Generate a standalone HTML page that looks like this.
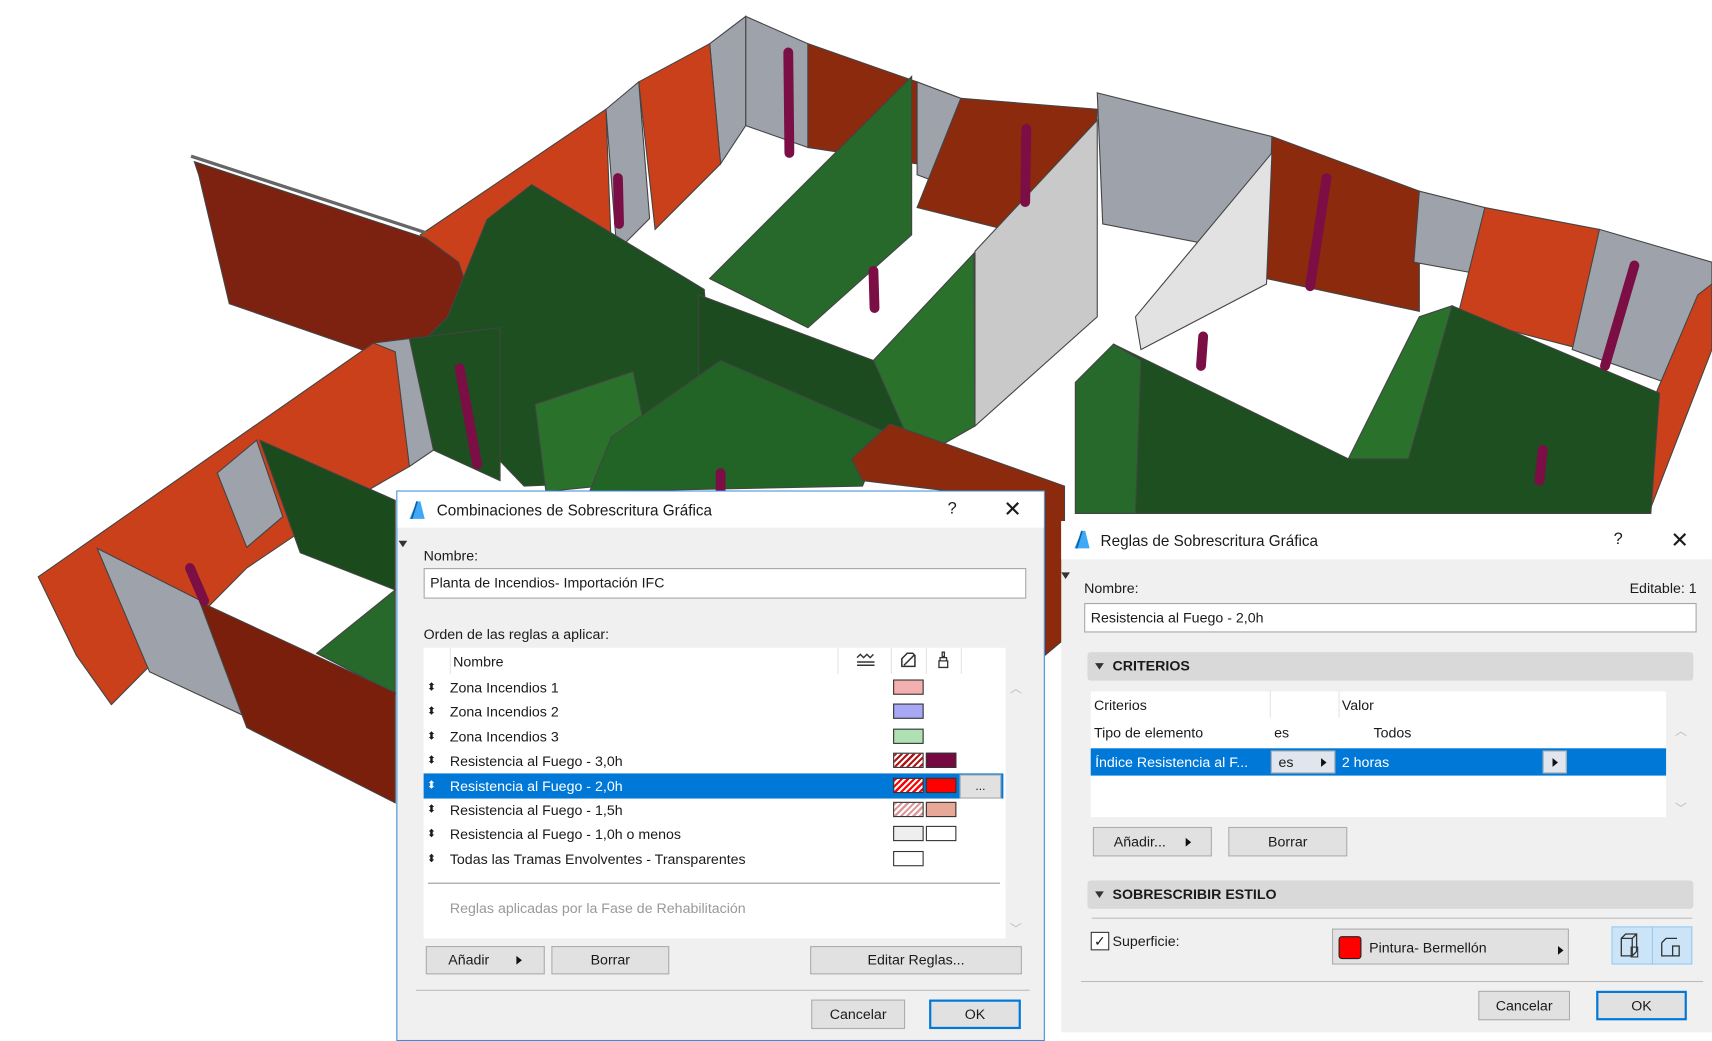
<!DOCTYPE html>
<html><head><meta charset="utf-8"><style>
html,body{margin:0;padding:0;width:1712px;height:1040px;overflow:hidden;background:#fff}
#s{position:absolute;left:0;top:0;width:1568px;height:952px;transform:scale(1.0918,1.0924);transform-origin:0 0;font-family:"Liberation Sans",sans-serif;font-size:13px;color:#1a1a1a}
.a{position:absolute}
.dlg{position:absolute;background:#f0f0f0}
.tb{position:absolute;left:0;right:0;top:0;background:#fff}
.in{position:absolute;background:#fff;border:1px solid #a6a6a6;box-sizing:border-box;padding-left:5px}
.btn{position:absolute;background:#e1e1e1;border:1px solid #adadad;box-sizing:border-box;text-align:center}
.ok{border:2px solid #0078d7}
.sw{position:absolute;width:26px;height:12px;border:1px solid #333}
.row{position:absolute;left:24px;font-size:13px}
.ar{position:absolute;left:3px;font-size:10px;line-height:10px}
.bar{position:absolute;background:#d9d9d9;border-radius:3px;font-weight:bold}
.tri{display:inline-block;width:0;height:0;border-left:4px solid transparent;border-right:4px solid transparent;border-top:6px solid #333;margin:0 8px 1px 7px}
.rt{display:inline-block;width:0;height:0;border-top:4px solid transparent;border-bottom:4px solid transparent;border-left:5px solid #111}
</style></head><body><div id="s">
<svg class="a" style="left:0;top:0" width="1568" height="952" viewBox="0 0 1568 952">
<g stroke="#444" stroke-width="1">
<polygon points="683,15 740,40 740,135 683,115" fill="#9ea3ab"/>
<polygon points="650,40 683,15 683,115 660,150" fill="#9ea3ab"/>
<polygon points="740,40 840,75 840,150 740,135" fill="#8c2a0e"/>
<polygon points="585,75 650,40 660,150 600,210" fill="#c9401a"/>
<polygon points="555,100 585,75 595,200 565,230" fill="#9ea3ab"/>
<polygon points="385,215 555,100 560,230 440,300" fill="#c9401a"/>
<polygon points="840,75 880,90 880,175 840,160" fill="#9ea3ab"/>
<polygon points="880,90 1005,100 1000,230 840,190" fill="#8c2a0e"/>
<polygon points="1005,85 1165,125 1165,235 1010,205" fill="#9ea3ab"/>
<polygon points="1165,125 1300,175 1300,285 1160,255" fill="#8c2a0e"/>
<polygon points="1300,175 1360,190 1350,250 1295,240" fill="#9ea3ab"/>
<polygon points="1360,190 1465,210 1450,320 1335,290" fill="#c9401a"/>
<polygon points="1465,210 1568,240 1568,300 1525,350 1440,320" fill="#9ea3ab"/>
<polygon points="1555,270 1568,260 1568,320 1510,470 1470,470" fill="#c9401a"/>
<polygon points="178,148 390,218 420,240 440,300 360,330 210,278 182,160" fill="#7d2210"/>
<polyline points="175,143 390,213" fill="none" stroke="#666" stroke-width="3"/>
<polygon points="893,230 1005,110 1005,290 893,390" fill="#c9c9c9"/>
<polygon points="1040,290 1165,140 1160,260 1045,320" fill="#e2e2e2"/>
<polygon points="650,255 835,70 835,215 740,300" fill="#26692a"/>
<polygon points="446,201 487,169 645,265 650,330 600,440 480,445 370,330 410,290" fill="#1d4f20"/>
<polygon points="640,270 800,330 892,232 892,385 840,420 740,430 640,400" fill="#1c4b1f"/>
<polygon points="800,330 892,232 893,390 840,420" fill="#2a722c"/>
<polygon points="490,370 580,340 600,440 500,450" fill="#2a722c"/>
<polygon points="560,400 660,330 810,395 790,445 540,450" fill="#226326"/>
<polygon points="985,350 1020,315 1235,420 1300,290 1330,280 1520,360 1512,470 985,470" fill="#1d4f20"/>
<polygon points="1235,420 1300,290 1330,280 1290,420" fill="#2a722c"/>
<polygon points="985,350 1020,315 1045,330 1040,470 985,470" fill="#26692a"/>
<polygon points="375,310 458,300 458,440 397,412" fill="#1d4f20"/>
<polygon points="342,314 375,310 397,412 375,427" fill="#9ea3ab"/>
<polygon points="35,528 342,314 362,322 375,427 300,470 226,520 102,645 70,600" fill="#c9401a"/>
<polygon points="199,433 235,403 259,473 226,501" fill="#9ea3ab"/>
<polygon points="238,403 362,458 362,540 275,506" fill="#1b4a1d"/>
<polygon points="290,598 362,540 362,635" fill="#26692a"/>
<polygon points="89,502 186,551 223,655 137,615" fill="#9ea3ab"/>
<polygon points="183,551 362,634 362,735 226,666" fill="#7a1f0b"/>
<polygon points="780,420 815,388 975,445 975,585 957,600 957,460 790,440" fill="#8c2a0e"/>
</g>
<g stroke="#7a0e45" stroke-width="9" stroke-linecap="round">
<line x1="722" y1="48" x2="723" y2="140"/><line x1="566" y1="163" x2="567" y2="205"/><line x1="940" y1="118" x2="939" y2="185"/><line x1="800" y1="248" x2="801" y2="282"/><line x1="1215" y1="163" x2="1200" y2="262"/><line x1="1497" y1="243" x2="1470" y2="335"/><line x1="1102" y1="308" x2="1100" y2="335"/><line x1="421" y1="337" x2="437" y2="425"/><line x1="174" y1="520" x2="187" y2="550"/><line x1="660" y1="433" x2="660" y2="450"/><line x1="1413" y1="412" x2="1410" y2="440"/>
</g>
</svg>

<div class="dlg" style="left:363px;top:449px;width:594px;height:504px;border:1px solid #3c8fd8;box-sizing:border-box">
 <div class="tb" style="height:33px"></div>
 <svg class="a" style="left:9px;top:8px" width="18" height="18"><path d="M2 17 L9 1 L12 1 L16 17 Z" fill="#3fa9f5"/><path d="M9 1 L4 17" stroke="#0a5fa8" stroke-width="1.5"/></svg>
 <div class="a" style="left:36px;top:9px;font-size:14px">Combinaciones de Sobrescritura Gráfica</div>
 <div class="a" style="left:504px;top:7px;font-size:15px">?</div>
 <div class="a" style="left:555px;top:4px;font-size:20px;font-weight:300">✕</div>
 <div class="a" style="left:1px;top:45px;border-left:4px solid transparent;border-right:4px solid transparent;border-top:6px solid #333"></div>
 <div class="a" style="left:24px;top:51px">Nombre:</div>
 <div class="in" style="left:24px;top:70px;width:552px;height:28px;line-height:26px">Planta de Incendios- Importación IFC</div>
 <div class="a" style="left:24px;top:123px">Orden de las reglas a aplicar:</div>
 <div class="a" style="left:24px;top:143px;width:533px;height:266px;background:#fff"></div>
 <div class="a" style="left:48px;top:143px;width:1px;height:24px;background:#e5e5e5"></div>
 <div class="a" style="left:403px;top:143px;width:1px;height:24px;background:#e5e5e5"></div>
 <div class="a" style="left:452px;top:143px;width:1px;height:24px;background:#e5e5e5"></div>
 <div class="a" style="left:484px;top:143px;width:1px;height:24px;background:#e5e5e5"></div>
 <div class="a" style="left:516px;top:143px;width:1px;height:24px;background:#e5e5e5"></div>
 <div class="a" style="left:51px;top:148px">Nombre</div>
 <svg class="a" style="left:420px;top:147px" width="18" height="14"><path d="M1 5 L4 2 L7 5 L10 2 L13 5 L16 2 M1 9 H17 M1 12 H17" fill="none" stroke="#333" stroke-width="1.3"/></svg>
 <svg class="a" style="left:460px;top:146px" width="16" height="16"><path d="M2 14 V7 L7 2 H12 L14 4 V14 Z M4 13 L13 4" fill="none" stroke="#333" stroke-width="1.4"/></svg>
 <svg class="a" style="left:494px;top:146px" width="12" height="16"><path d="M5 1 H7 V5 H5 Z M3 6 H9 V9 H3 Z M2 9 H10 V15 H2 Z" fill="none" stroke="#333" stroke-width="1.2"/></svg>
 <div class="a" style="left:24px;top:258px;width:531px;height:23px;background:#0078d7"></div>
 <div class="ar" style="left:27px;top:175px">⬍</div><div class="row" style="left:48px;top:172px">Zona Incendios 1</div>
 <div class="ar" style="left:27px;top:197px">⬍</div><div class="row" style="left:48px;top:194px">Zona Incendios 2</div>
 <div class="ar" style="left:27px;top:220px">⬍</div><div class="row" style="left:48px;top:217px">Zona Incendios 3</div>
 <div class="ar" style="left:27px;top:242px">⬍</div><div class="row" style="left:48px;top:239px">Resistencia al Fuego - 3,0h</div>
 <div class="ar" style="left:27px;top:265px;color:#fff">⬍</div><div class="row" style="left:48px;top:262px;color:#fff">Resistencia al Fuego - 2,0h</div>
 <div class="ar" style="left:27px;top:287px">⬍</div><div class="row" style="left:48px;top:284px">Resistencia al Fuego - 1,5h</div>
 <div class="ar" style="left:27px;top:309px">⬍</div><div class="row" style="left:48px;top:306px">Resistencia al Fuego - 1,0h o menos</div>
 <div class="ar" style="left:27px;top:332px">⬍</div><div class="row" style="left:48px;top:329px">Todas las Tramas Envolventes - Transparentes</div>
 <div class="sw" style="left:454px;top:172px;background:#f4b0b0"></div>
 <div class="sw" style="left:454px;top:194px;background:#a8a8f4"></div>
 <div class="sw" style="left:454px;top:217px;background:#aee0b4"></div>
 <div class="sw" style="left:454px;top:239px;background:repeating-linear-gradient(135deg,#b01515 0 2px,#fff 2px 4px)"></div>
 <div class="sw" style="left:484px;top:239px;background:#760940"></div>
 <div class="sw" style="left:454px;top:262px;background:repeating-linear-gradient(135deg,#f00 0 2px,#fff 2px 4px)"></div>
 <div class="sw" style="left:484px;top:262px;background:#f00"></div>
 <div class="a" style="left:515px;top:259px;width:36px;height:20px;background:#e1e1e1;border:1px solid #adadad;text-align:center;font-size:11px;line-height:20px">...</div>
 <div class="sw" style="left:454px;top:284px;background:repeating-linear-gradient(135deg,#d99 0 2px,#fff 2px 4px)"></div>
 <div class="sw" style="left:484px;top:284px;background:#e8a898"></div>
 <div class="sw" style="left:454px;top:306px;background:#eee"></div>
 <div class="sw" style="left:484px;top:306px;background:#fff"></div>
 <div class="sw" style="left:454px;top:329px;background:#fff"></div>
 <div class="a" style="left:28px;top:358px;width:524px;height:1px;background:#999"></div>
 <div class="a" style="left:48px;top:374px;color:#999">Reglas aplicadas por la Fase de Rehabilitación</div>
 <div class="a" style="left:561px;top:172px;color:#bbb;font-size:11px">︿</div>
 <div class="a" style="left:561px;top:392px;color:#bbb;font-size:11px">﹀</div>
 <div class="btn" style="left:26px;top:416px;width:109px;height:26px;line-height:24px">Añadir&nbsp;&nbsp;&nbsp;&nbsp;&nbsp;&nbsp;&nbsp;<span class="rt"></span></div>
 <div class="btn" style="left:141px;top:416px;width:108px;height:26px;line-height:24px">Borrar</div>
 <div class="btn" style="left:378px;top:416px;width:194px;height:26px;line-height:24px">Editar Reglas...</div>
 <div class="a" style="left:17px;top:456px;width:562px;height:1px;background:#bbb"></div>
 <div class="btn" style="left:379px;top:465px;width:86px;height:27px;line-height:25px">Cancelar</div>
 <div class="btn ok" style="left:487px;top:465px;width:84px;height:27px;line-height:23px">OK</div>
</div>

<div class="dlg" style="left:972px;top:477px;width:596px;height:468px">
 <div class="tb" style="height:35px"></div>
 <svg class="a" style="left:10px;top:8px" width="18" height="18"><path d="M2 17 L9 1 L12 1 L16 17 Z" fill="#3fa9f5"/><path d="M9 1 L4 17" stroke="#0a5fa8" stroke-width="1.5"/></svg>
 <div class="a" style="left:36px;top:10px;font-size:14px">Reglas de Sobrescritura Gráfica</div>
 <div class="a" style="left:506px;top:8px;font-size:15px">?</div>
 <div class="a" style="left:558px;top:5px;font-size:20px">✕</div>
 <div class="a" style="left:0px;top:47px;border-left:4px solid transparent;border-right:4px solid transparent;border-top:6px solid #333"></div>
 <div class="a" style="left:21px;top:54px">Nombre:</div>
 <div class="a" style="right:14px;top:54px">Editable: 1</div>
 <div class="in" style="left:21px;top:75px;width:561px;height:27px;line-height:25px">Resistencia al Fuego - 2,0h</div>
 <div class="bar" style="left:24px;top:120px;width:555px;height:26px;line-height:26px"><span class="tri"></span>CRITERIOS</div>
 <div class="a" style="left:27px;top:156px;width:527px;height:115px;background:#fff"></div>
 <div class="a" style="left:191px;top:156px;width:1px;height:24px;background:#e5e5e5"></div>
 <div class="a" style="left:254px;top:156px;width:1px;height:24px;background:#e5e5e5"></div>
 <div class="a" style="left:30px;top:161px">Criterios</div>
 <div class="a" style="left:257px;top:161px">Valor</div>
 <div class="a" style="left:30px;top:186px">Tipo de elemento</div>
 <div class="a" style="left:195px;top:186px">es</div>
 <div class="a" style="left:286px;top:186px">Todos</div>
 <div class="a" style="left:27px;top:208px;width:527px;height:25px;background:#0078d7"></div>
 <div class="a" style="left:31px;top:213px;color:#fff">Índice Resistencia al F...</div>
 <div class="a" style="left:192px;top:210px;width:59px;height:21px;background:#e1e6ee;border:1px solid #adadad;box-sizing:border-box;line-height:19px;padding-left:6px">es&nbsp;&nbsp;&nbsp;&nbsp;&nbsp;&nbsp;&nbsp;<span class="rt"></span></div>
 <div class="a" style="left:257px;top:213px;color:#fff">2 horas</div>
 <div class="a" style="left:441px;top:210px;width:22px;height:21px;background:#e1e6ee;border:1px solid #adadad;box-sizing:border-box;text-align:center;line-height:19px"><span class="rt"></span></div>
 <div class="a" style="left:562px;top:184px;color:#bbb;font-size:11px">︿</div>
 <div class="a" style="left:562px;top:255px;color:#bbb;font-size:11px">﹀</div>
 <div class="btn" style="left:29px;top:280px;width:109px;height:27px;line-height:25px">Añadir...&nbsp;&nbsp;&nbsp;&nbsp;&nbsp;<span class="rt"></span></div>
 <div class="btn" style="left:153px;top:280px;width:109px;height:27px;line-height:25px">Borrar</div>
 <div class="bar" style="left:24px;top:329px;width:555px;height:26px;line-height:26px"><span class="tri"></span>SOBRESCRIBIR ESTILO</div>
 <div class="a" style="left:28px;top:363px;width:550px;height:1px;background:#bbb"></div>
 <div class="a" style="left:27px;top:376px;width:15px;height:15px;border:1px solid #333;background:#fff;font-size:13px;line-height:15px;text-align:center">✓</div>
 <div class="a" style="left:47px;top:377px">Superficie:</div>
 <div class="btn" style="left:248px;top:373px;width:217px;height:33px;text-align:left"><div class="a" style="left:5px;top:6px;width:19px;height:19px;background:#f00;border:1px solid #222;border-radius:3px"></div><div class="a" style="left:33px;top:9px">Pintura- Bermellón</div><div class="a" style="left:206px;top:11px"><span class="rt"></span></div></div>
 <div class="a" style="left:504px;top:371px;width:74px;height:35px;background:#cce4f7;border:1px solid #99c9ef;box-sizing:border-box"></div>
 <div class="a" style="left:541px;top:371px;width:1px;height:35px;background:#99c9ef"></div>
 <svg class="a" style="left:510px;top:376px" width="64" height="26"><g fill="none" stroke="#333" stroke-width="1.2"><path d="M3 6 L7 2 L17 2 L17 18 L13 22 L3 22 Z M3 6 L13 6 L13 22 M13 6 L17 2"/><path d="M40 10 L44 6 L54 6 M40 10 L40 22 L50 22" /><rect x="50" y="13" width="6" height="9"/></g><rect x="12" y="14" width="6" height="9" fill="none" stroke="#333"/></svg>
 <div class="a" style="left:18px;top:421px;width:570px;height:1px;background:#bbb"></div>
 <div class="btn" style="left:382px;top:430px;width:84px;height:27px;line-height:25px">Cancelar</div>
 <div class="btn ok" style="left:490px;top:430px;width:83px;height:27px;line-height:23px">OK</div>
</div>
</div></body></html>
